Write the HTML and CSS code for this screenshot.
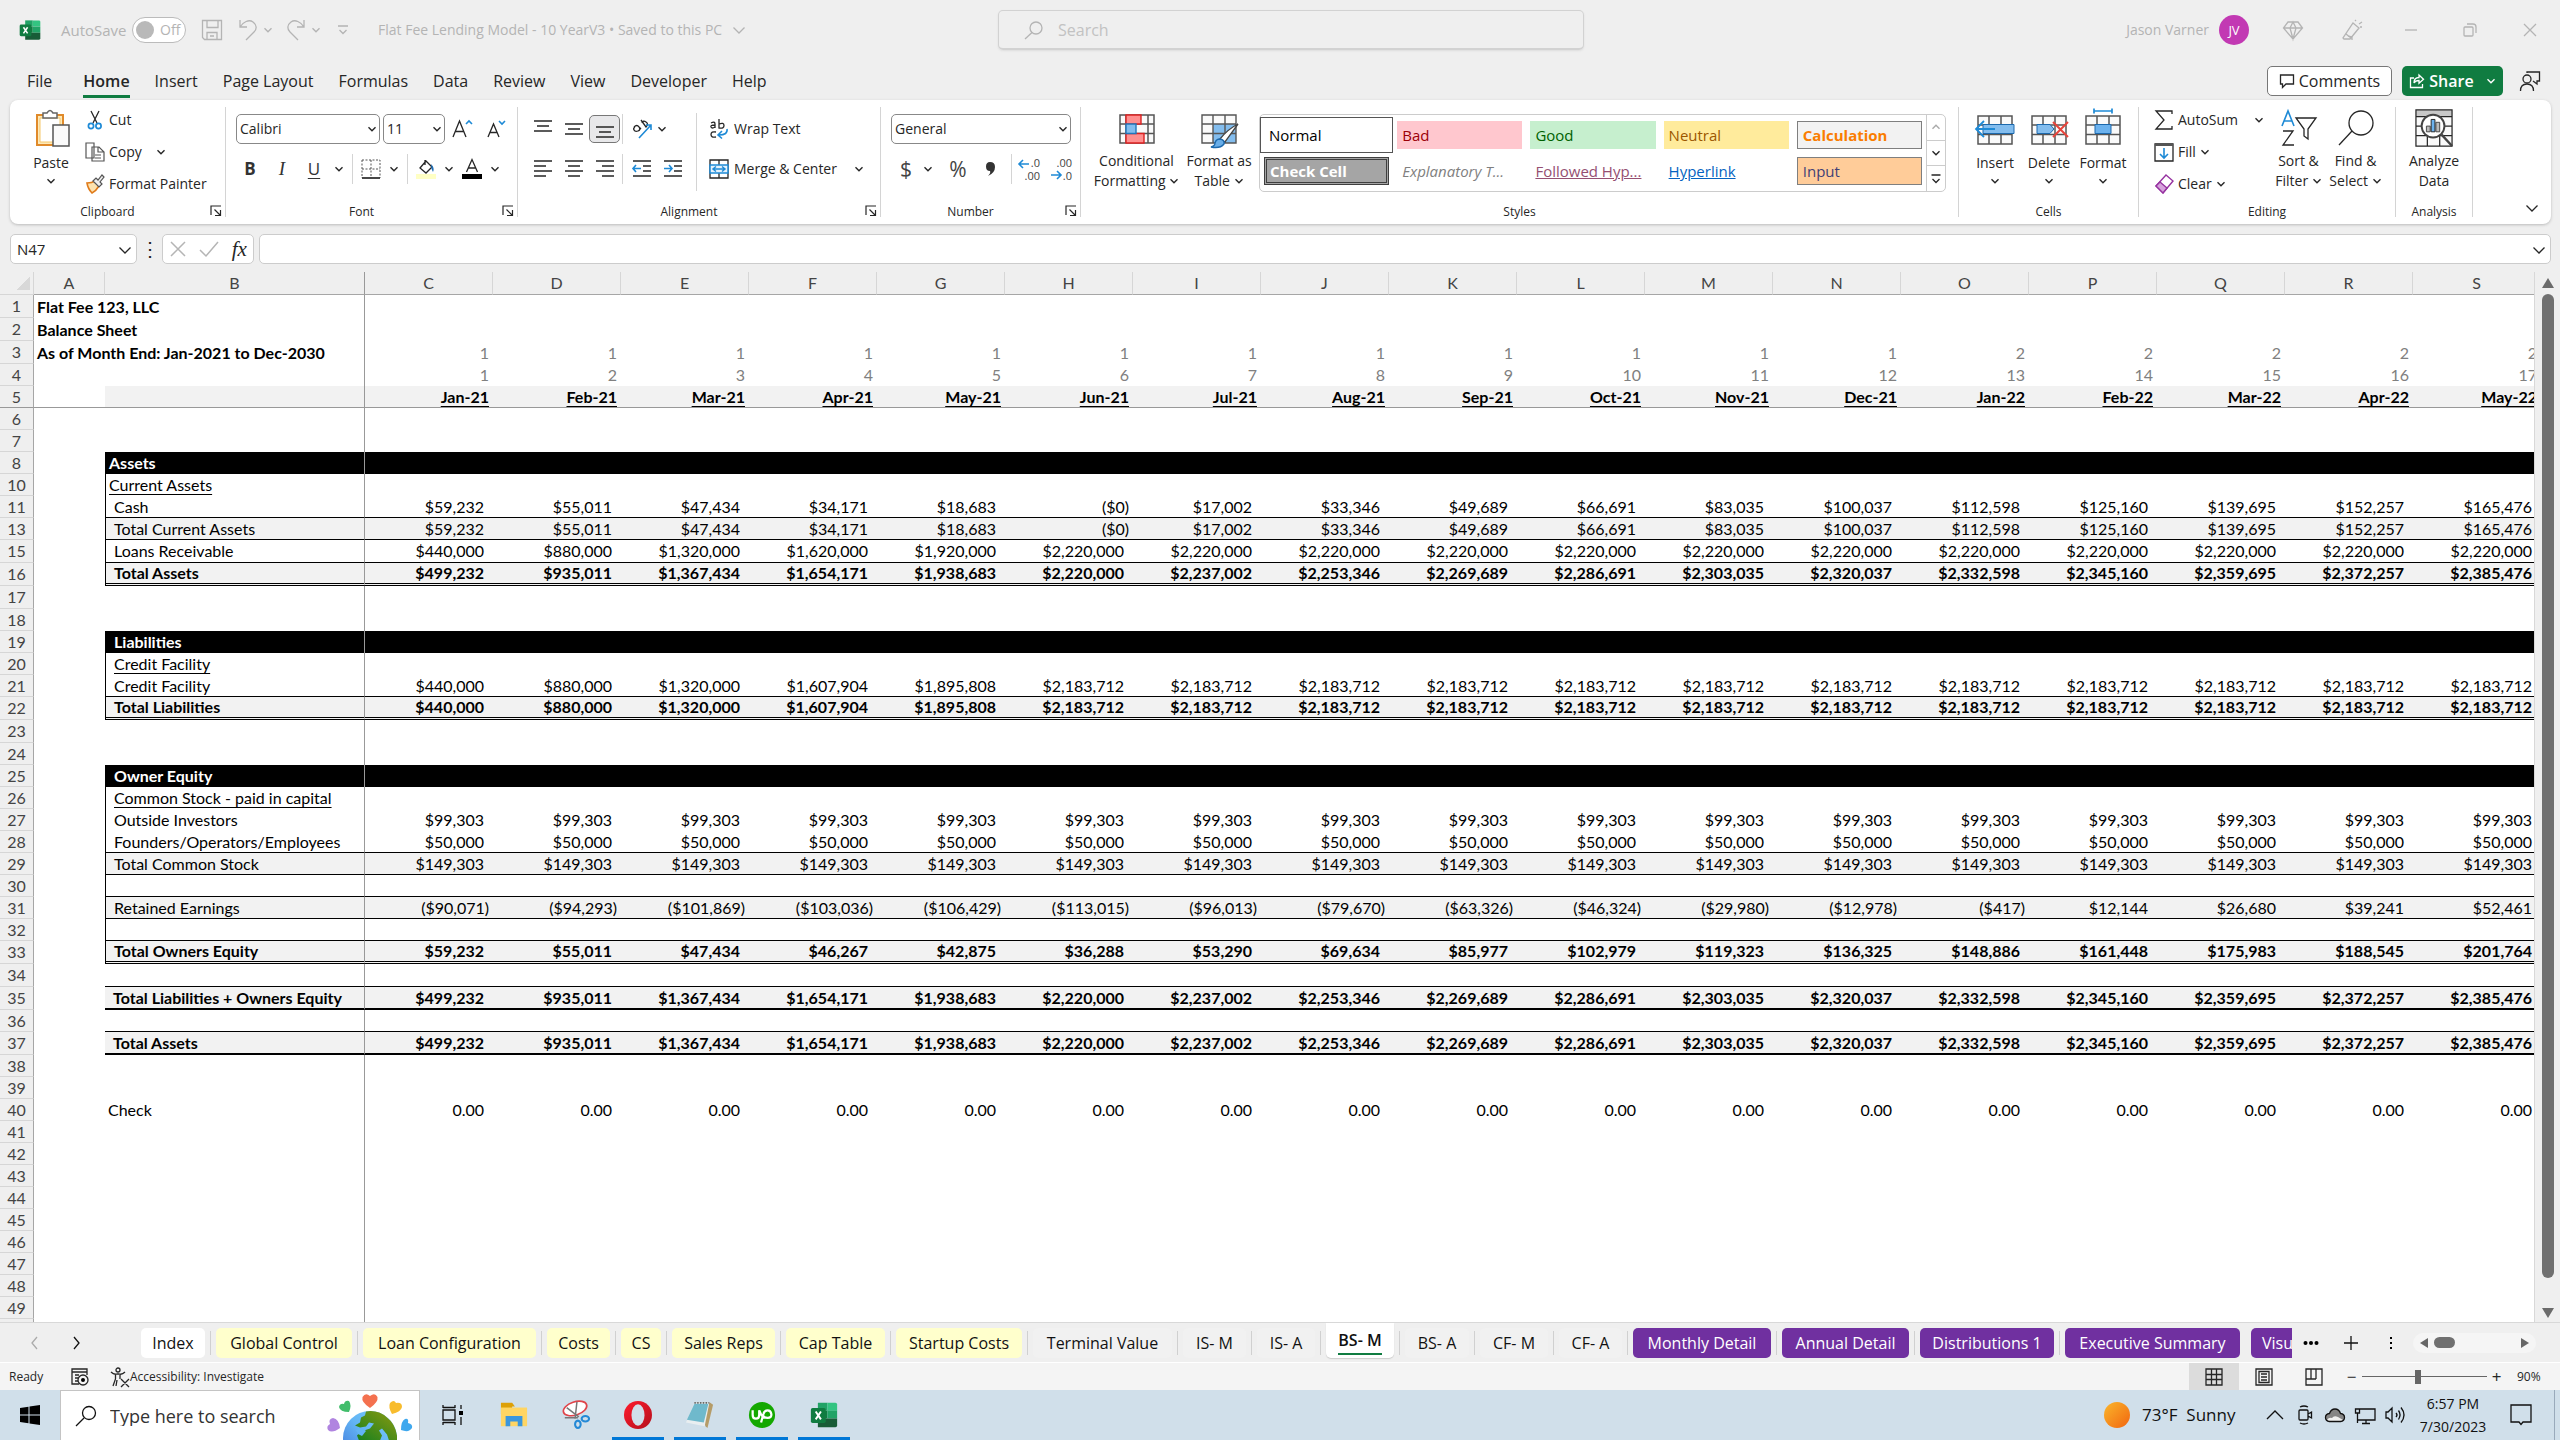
FILE: index.html
```html
<!DOCTYPE html>
<html lang="en">
<head>
<meta charset="utf-8">
<title>Flat Fee Lending Model - 10 YearV3</title>
<link rel="stylesheet" href="styles.css">
</head>
<body>
<svg class="defs" aria-hidden="true">
  <symbol id="chev" viewBox="0 0 10 10"><path d="M1.5 3.2 5 6.7 8.500 3.200" fill="none" stroke="currentColor" stroke-width="1.4"/></symbol>
  <symbol id="wide" viewBox="0 0 14 14"><path d="M1.500 4.500 7 10l5.500-5.500" fill="none" stroke="currentColor" stroke-width="1.300"/></symbol>
  <symbol id="launch" viewBox="0 0 12 12"><path d="M1 10V1h10M4.500 4.500 10 10M10.500 5v5.500H5" fill="none" stroke="currentColor" stroke-width="1.200"/></symbol>
  <symbol id="excel" viewBox="0 0 32 32"><path d="M9 2h11v9H9z" fill="#21a366"/><path d="M20 2h9q2 0 2 2v7H20z" fill="#33c481"/><path d="M9 11h11v9H9z" fill="#107c41"/><path d="M20 11h11v9H20z" fill="#21a366"/><path d="M9 20h22v8q0 2-2 2H9z" fill="#185c37"/><rect x="1" y="8" width="17" height="17" rx="2" fill="#107c41"/><path d="m6.500 12 6 9M12.500 12l-6 9" stroke="#fff" stroke-width="2.200"/></symbol>
  <symbol id="grid" viewBox="0 0 36 30"><path d="M1 1h34v28H1z" fill="#fafafa"/><path d="M1 1h34v28H1zM1 10h34M1 19.500h34M12 1v28M24 1v28" fill="none" stroke="#555" stroke-width="1.500"/></symbol>
</svg>

<header class="titlebar">
  <div class="title-left">
    <svg class="i22"><use href="#excel"/></svg>
    <label class="autosave" for="autosave">AutoSave</label>
    <span class="toggle"><input type="checkbox" id="autosave"><span>Off</span></span>
    <button class="plain save" aria-label="Save"><svg class="i22" viewBox="0 0 22 22"><path d="M1.500 1.500h19v19h-17l-2-2zM6 1.500v7h11v-7M6 20.500v-7h10v7M9 17h4" class="ln"/></svg></button>
    <button class="plain hist" aria-label="Undo"><svg class="i22" viewBox="0 0 22 22"><path d="M3 1v7h7M3 8C6 3 12 0 16 3s4 7 1 10l-8 8" class="ln"/></svg><svg class="i10"><use href="#chev"/></svg></button>
    <button class="plain hist" aria-label="Redo"><svg class="i22" viewBox="0 0 22 22"><path d="M19 1v7h-7M19 8C16 3 10 0 6 3s-4 7-1 10l8 8" class="ln"/></svg><svg class="i10"><use href="#chev"/></svg></button>
    <button class="plain custom" aria-label="Customize toolbar"><svg class="i12" viewBox="0 0 12 12"><path d="M1 2h10M2.500 6 6 9.500 9.500 6" class="ln"/></svg></button>
    <button class="plain doc">Flat Fee Lending Model - 10 YearV3 • Saved to this PC <svg class="i14"><use href="#wide"/></svg></button>
  </div>
  <label class="search"><svg class="i20" viewBox="0 0 20 20"><circle cx="12" cy="8" r="6" class="ln"/><path d="m8 12.500-7 6.500" class="ln"/></svg><input type="text" placeholder="Search" aria-label="Search"></label>
  <div class="title-right">
    <span>Jason Varner</span><span class="avatar">JV</span>
    <button class="plain win" aria-label="Premium"><svg class="i22" viewBox="0 0 22 22"><path d="M6 3h10l4.500 6L11 20 1.500 9zM1.500 9h19M8 9l3 11 3-11M8 9l3-6 3 6" class="ln"/></svg></button>
    <button class="plain win" aria-label="Coming soon"><svg class="i22" viewBox="0 0 22 22"><path d="m12 4 6 5-9 11H3l-1-1zM5 15l5 4M14 2l1-1M18 5l3-2M19 8h2M7 17l4 1 0 3" class="ln"/></svg></button>
    <button class="plain win" aria-label="Minimize"><svg class="i14" viewBox="0 0 14 14"><path d="M1 7h12" class="ln"/></svg></button>
    <button class="plain win" aria-label="Restore"><svg class="i14" viewBox="0 0 14 14"><path d="M1 5q0-1 1-1h7q1 0 1 1v7q0 1-1 1H2q-1 0-1-1zM4 1h6q3 0 3 3v6" class="ln"/></svg></button>
    <button class="plain win" aria-label="Close"><svg class="i14" viewBox="0 0 14 14"><path d="m1 1 12 12M13 1 1 13" class="ln"/></svg></button>
  </div>
</header>

<nav class="menu">
  <a href="#">File</a><a href="#" class="on">Home</a><a href="#">Insert</a><a href="#">Page Layout</a><a href="#">Formulas</a><a href="#">Data</a><a href="#">Review</a><a href="#">View</a><a href="#">Developer</a><a href="#">Help</a>
  <div class="menu-right">
    <button class="comments"><svg class="i16" viewBox="0 0 16 16"><path d="M1.500 2h13v9H7l-3.500 3.500V11h-2z" class="ln"/></svg>Comments</button>
    <button class="share"><svg class="i16" viewBox="0 0 16 16"><path d="M5 5H1.500v9.500h12V11M5 10c0-4 2-5.500 5-5.500V2l4.500 4.200-4.500 4V7.500C8 7.500 6 8 5 10z" class="ln"/></svg>Share<svg class="i10"><use href="#chev"/></svg></button>
    <button class="plain" aria-label="Presence"><svg class="i22" viewBox="0 0 22 22"><circle cx="8" cy="9" r="4" class="ln"/><path d="M1.500 21c0-5 3-7 6.500-7s6.500 2 6.500 7M8 3V2h12.500v9H18v3l-4-3" class="ln"/></svg></button>
  </div>
</nav>

<section class="ribbon">
  <div class="group g-clip">
    <div class="body">
      <button class="big paste"><svg viewBox="0 0 36 38"><path d="M2 6h26v30H2z" fill="#fde9b8" stroke="#e08a2a" stroke-width="2"/><path d="M5 9h20v24H5z" fill="#fff" stroke="#f5c76b"/><path d="M8 4h4q3-5 6 0h4v5H8z" fill="#fff" stroke="#666" stroke-width="1.500"/><path d="M18 16h16v21H18z" fill="#fafafa" stroke="#555" stroke-width="1.500"/></svg><span>Paste</span><svg class="i10"><use href="#chev"/></svg></button>
      <div class="stack">
        <button class="row"><svg class="i20" viewBox="0 0 20 20"><path d="m6 1 6 12M14 1 8 13" class="ln"/><g fill="none" stroke="#1e8ad6" stroke-width="1.700"><circle cx="6" cy="16" r="2.600"/><circle cx="13.500" cy="16" r="2.600"/></g></svg>Cut</button>
        <button class="row"><svg class="i20" viewBox="0 0 20 20"><path d="M1 1h8v15H1zM7 5h7l5 5v9H7zM13 5v5h6M10 13h6M10 16h6" fill="#fff" stroke="#555" stroke-width="1.200"/></svg>Copy<svg class="i10 far"><use href="#chev"/></svg></button>
        <button class="row"><svg class="i20" viewBox="0 0 20 20"><path d="M2 9q5 0 8-2l4 5q-3 5-7 7-4-4-5-10z" fill="#fde3b0" stroke="#e07b1a" stroke-width="1.600"/><path d="m8 7 3-3 2 2 4-5 2 2-4 5 2 2-3 3z" fill="#eee" stroke="#555" stroke-width="1.200"/></svg>Format Painter</button>
      </div>
    </div>
    <div class="label off">Clipboard<svg class="i12"><use href="#launch"/></svg></div>
  </div>

  <div class="group g-font">
    <div class="body lines">
      <div class="line">
        <span class="combo w-font"><select aria-label="Font"><option>Calibri</option></select><svg class="i10"><use href="#chev"/></svg></span>
        <span class="combo w-size"><select aria-label="Font size"><option>11</option></select><svg class="i10"><use href="#chev"/></svg></span>
        <button class="ib grow" aria-label="Increase font size"><svg class="i22" viewBox="0 0 22 22"><path d="M0 19 6.500 3 13 19M2.500 13.500h8" class="ln"/><path d="m13 6 3-3 3 3" class="lb"/></svg></button>
        <button class="ib" aria-label="Decrease font size"><svg class="i22" viewBox="0 0 22 22"><path d="M2 19 7.500 6 13 19M4 14.500h7" class="ln"/><path d="m13 3 3 3 3-3" class="lb"/></svg></button>
      </div>
      <div class="line tools">
        <button class="ib fmt b">B</button><button class="ib fmt i">I</button><button class="ib fmt u">U</button><svg class="i10"><use href="#chev"/></svg><i class="sep"></i>
        <button class="ib" aria-label="Borders"><svg class="i20" viewBox="0 0 20 20"><path d="M1 1h18v18M1 1v18M10 1v18M1 10h18" fill="none" stroke="#555" stroke-dasharray="2 1.500"/><path d="M1 19h18" stroke="#333" stroke-width="1.800"/></svg></button><svg class="i10"><use href="#chev"/></svg><i class="sep"></i>
        <button class="ib" aria-label="Fill color"><svg class="i20" viewBox="0 0 20 20"><path d="m4 9 6-7 6 6-6 6zM9 1v5" class="ln"/><path d="M15 5q4 4 2 8-2-3-2-8z" fill="#1e6fb8"/><path d="M0 15h20v5H0z" fill="#ffffc4"/></svg></button><svg class="i10"><use href="#chev"/></svg>
        <button class="ib" aria-label="Font color"><svg class="i20" viewBox="0 0 20 20"><path d="M4.500 13 10 0.500 15.500 13M6.500 9h7" class="ln"/><path d="M0 15h20v5H0z"/></svg></button><svg class="i10"><use href="#chev"/></svg>
      </div>
    </div>
    <div class="label off">Font<svg class="i12"><use href="#launch"/></svg></div>
  </div>

  <div class="group g-align">
    <div class="body">
      <div class="lines">
        <div class="line al">
          <button class="ib" aria-label="Top align"><svg class="i20" viewBox="0 0 20 20"><path d="M1 2h18M4 7h12M1 12h18" class="ln"/></svg></button>
          <button class="ib" aria-label="Middle align"><svg class="i20" viewBox="0 0 20 20"><path d="M1 5h18M4 10h12M1 15h18" class="ln"/></svg></button>
          <button class="ib sel" aria-label="Bottom align"><svg class="i20" viewBox="0 0 20 20"><path d="M1 8h18M4 13h12M1 18h18" class="ln"/></svg></button><i class="sep"></i>
          <button class="ib" aria-label="Orientation"><svg class="i20" viewBox="0 0 20 20"><path d="M2 8q3-3 5 0t-1 4-4-1 1-3M7 8l2 2M9 1l5 7q3-3 0-5t-4 1" class="ln"/><path d="M7 19 19 6M14 6h5v5" class="lb"/></svg></button><svg class="i10"><use href="#chev"/></svg>
        </div>
        <div class="line al">
          <button class="ib" aria-label="Align left"><svg class="i20" viewBox="0 0 20 20"><path d="M1 2h18M1 7h12M1 12h18M1 17h12" class="ln"/></svg></button>
          <button class="ib" aria-label="Center"><svg class="i20" viewBox="0 0 20 20"><path d="M1 2h18M4 7h12M1 12h18M4 17h12" class="ln"/></svg></button>
          <button class="ib" aria-label="Align right"><svg class="i20" viewBox="0 0 20 20"><path d="M1 2h18M7 7h12M1 12h18M7 17h12" class="ln"/></svg></button><i class="sep"></i>
          <button class="ib" aria-label="Decrease indent"><svg class="i20" viewBox="0 0 20 20"><path d="M1 2h18M11 7h8M11 12h8M1 17h18" class="ln"/><path d="M9 9.500H1M4 6 1 9.500 4 13" class="lb"/></svg></button>
          <button class="ib" aria-label="Increase indent"><svg class="i20" viewBox="0 0 20 20"><path d="M1 2h18M11 7h8M11 12h8M1 17h18" class="ln"/><path d="M1 9.500h8M6 6l3 3.500L6 13" class="lb"/></svg></button>
        </div>
      </div>
      <i class="sep tall"></i>
      <div class="lines wrapcol">
        <button class="row"><svg class="i20" viewBox="0 0 20 20"><path d="M2 4q4-2 4 1v4M6 6Q1 6 2 8t4 0M10 0v9q5 1 5-2.500T10 5M7 13q-5-1-5 2.500T7 18" class="ln"/><path d="M18 10q1 6-8 6M13 12l-4 4 4 3.500" class="lb"/></svg>Wrap Text</button>
        <button class="row"><svg class="i20" viewBox="0 0 20 20"><path d="M1 1h18v18H1zM10 1v5M10 14v5" class="ln"/><path d="M1 6h18v8H1zM4 10h12M7 7.500 4 10l3 2.500M13 7.500 16 10l-3 2.500" fill="#e6f2fb" stroke="#1e8ad6" stroke-width="1.500"/></svg>Merge &amp; Center<svg class="i10 far"><use href="#chev"/></svg></button>
      </div>
    </div>
    <div class="label off">Alignment<svg class="i12"><use href="#launch"/></svg></div>
  </div>

  <div class="group g-num">
    <div class="body lines">
      <div class="line"><span class="combo w-num"><select aria-label="Number format"><option>General</option></select><svg class="i10"><use href="#chev"/></svg></span></div>
      <div class="line nums">
        <button class="ib sym">$</button><svg class="i10"><use href="#chev"/></svg><button class="ib sym">%</button><button class="ib comma" aria-label="Comma style"><svg class="i20" viewBox="0 0 20 20"><path d="M10 3q5 0 5 5 0 6-7 9 3-3 2-5-4 0-4-4.500Q6 3 10 3z" fill="#333"/></svg></button><i class="sep"></i>
        <button class="ib dec" aria-label="Increase decimal"><span>.0</span><span>.00</span><svg class="i12 a1" viewBox="0 0 12 12"><path d="M11 6H1M5 2 1 6l4 4" class="lb"/></svg></button>
        <button class="ib dec" aria-label="Decrease decimal"><span>.00</span><span>.0</span><svg class="i12 a2" viewBox="0 0 12 12"><path d="M1 6h10M7 2l4 4-4 4" class="lb"/></svg></button>
      </div>
    </div>
    <div class="label off">Number<svg class="i12"><use href="#launch"/></svg></div>
  </div>

  <div class="group g-styles">
    <div class="body">
      <button class="big two"><svg viewBox="0 0 36 30"><path d="M1 1h34v28H1z" fill="#fafafa"/><path d="M1 1h34v28H1zM1 10h34M1 19.500h34M7 1v28M29 1v28" fill="none" stroke="#555" stroke-width="1.500"/><path d="M7 1h15v9H7zM7 19.500h18V29H7z" fill="#ff8f8f" stroke="#d22" stroke-width="1.400"/><path d="M7 10h10v9.500H7z" fill="#83bdee" stroke="#2277bb" stroke-width="1.400"/></svg><span>Conditional<br>Formatting <svg class="i10"><use href="#chev"/></svg></span></button>
      <button class="big two tbl"><svg viewBox="0 0 36 30"><path d="M1 1h34v28H1z" fill="#fafafa"/><path d="M12 10h23v19H12z" fill="#83bdee"/><path d="M1 1h34v28H1zM1 10h34M1 19.500h34M12 1v28M24 1v28" fill="none" stroke="#555" stroke-width="1.400"/><path d="M37 10 24 28l-5-3q8-10 18-15z" fill="#fff" stroke="#444" stroke-width="1.300"/><path d="M19 25q5 1 4 5-4 5-13 3 4-1 4-4 1-4 5-4z" fill="#69aee8" stroke="#1c69ad" stroke-width="1.400"/></svg><span>Format as<br>Table <svg class="i10"><use href="#chev"/></svg></span></button>
      <div class="gallery">
        <div class="cells">
          <button class="st normal">Normal</button><button class="st bad">Bad</button><button class="st good">Good</button><button class="st neutral">Neutral</button><button class="st calc">Calculation</button>
          <button class="st check">Check Cell</button><button class="st expl">Explanatory T...</button><button class="st fol">Followed Hyp...</button><button class="st hyp">Hyperlink</button><button class="st input">Input</button>
        </div>
        <div class="spin"><button aria-label="Up"><svg class="i10 flip"><use href="#chev"/></svg></button><button aria-label="Down"><svg class="i10"><use href="#chev"/></svg></button><button aria-label="More"><svg class="i12" viewBox="0 0 12 12"><path d="M1.500 2h9M2.500 6 6 9.500 9.500 6" class="ln"/></svg></button></div>
      </div>
    </div>
    <div class="label">Styles</div>
  </div>

  <div class="group g-cells">
    <div class="body">
      <button class="big"><svg viewBox="0 0 40 38"><use href="#grid" x="2" y="6" width="36" height="30"/><path d="M8 15.500h31v9H8z" fill="#83bdee" stroke="#1c69ad"/><path d="M20 20H1M9 12l-8 8 8 8" fill="none" stroke="#1e8ad6" stroke-width="1.800"/></svg><span>Insert</span><svg class="i10"><use href="#chev"/></svg></button>
      <button class="big"><svg viewBox="0 0 40 38"><use href="#grid" x="2" y="6" width="36" height="30"/><path d="M8 15.500h13l4 4.500-4 4.500H8z" fill="#83bdee" stroke="#1c69ad"/><path d="m24 13 15 15M39 13 24 28" stroke="#e8443a" stroke-width="2"/></svg><span>Delete</span><svg class="i10"><use href="#chev"/></svg></button>
      <button class="big"><svg viewBox="0 0 40 38"><use href="#grid" x="2" y="6" width="36" height="30"/><path d="M12 15.500h16v9H12z" fill="#6cb2ee" stroke="#1c69ad"/><path d="M11 2h18M11-.5v5M29-.5v5" stroke="#1e8ad6" stroke-width="1.700"/></svg><span>Format</span><svg class="i10"><use href="#chev"/></svg></button>
    </div>
    <div class="label">Cells</div>
  </div>

  <div class="group g-edit">
    <div class="body">
      <div class="stack">
        <button class="row"><svg class="i20" viewBox="0 0 20 20"><path d="M18 4V1H2l8 9-8 9h16v-3" class="ln"/></svg>AutoSum<svg class="i10 far"><use href="#chev"/></svg></button>
        <button class="row"><svg class="i20" viewBox="0 0 20 20"><path d="M1 2h18v17H1z" class="ln"/><path d="M1 1h18v3H1z" fill="#555"/><path d="M10 6v10M6 12l4 4 4-4" class="lb"/></svg>Fill<svg class="i10 near"><use href="#chev"/></svg></button>
        <button class="row"><svg class="i20" viewBox="0 0 20 20"><path d="M12 1 19 7 9 19 2 12z" fill="#fff" stroke="#9632a0" stroke-width="1.400"/><path d="m6 8 7 6-4 5-7-7z" fill="#d6a3dc" stroke="#9632a0" stroke-width="1.400"/></svg>Clear<svg class="i10 near"><use href="#chev"/></svg></button>
      </div>
      <button class="big two"><svg viewBox="0 0 36 38"><path d="m1 17 6-15 6 15M3 12h8" class="lb"/><path d="M2 22h10L2 36h11M15 9h20l-8 11v10l-4-3v-7z" class="ln"/></svg><span>Sort &amp;<br>Filter <svg class="i10"><use href="#chev"/></svg></span></button>
      <button class="big two"><svg viewBox="0 0 36 38"><circle cx="23" cy="14" r="12" class="ln"/><path d="M14 22 1 36" class="ln"/></svg><span>Find &amp;<br>Select <svg class="i10"><use href="#chev"/></svg></span></button>
    </div>
    <div class="label">Editing</div>
  </div>

  <div class="group g-ana">
    <div class="body">
      <button class="big two"><svg viewBox="0 0 40 40"><path d="M1 1h38v38H1z" fill="#fafafa"/><path d="M1 1h38v7H1z" fill="#c8c8c8"/><path d="M1 1h38v38H1zM1 8h38M1 18h38M1 28h38M13 28v11M26 28v11" class="ln"/><circle cx="19" cy="18" r="12" fill="#fff" stroke="#444" stroke-width="2"/><path d="M12 18h4v6h-4zM22 14h4v10h-4z" fill="#bbb" stroke="#444"/><path d="M17 11h4v13h-4z" fill="#6cb2ee" stroke="#222"/><path d="m28 27 11 12" stroke="#444" stroke-width="2.500"/></svg><span>Analyze<br>Data</span></button>
    </div>
    <div class="label">Analysis</div>
  </div>
  <button class="plain collapse" aria-label="Collapse ribbon"><svg class="i14"><use href="#wide"/></svg></button>
</section>

<section class="formula">
  <span class="combo name"><input type="text" value="N47" aria-label="Name box"><svg class="i14"><use href="#wide"/></svg></span>
  <span class="dots">⋮</span>
  <div class="fx"><button class="plain" aria-label="Cancel"><svg class="i18" viewBox="0 0 18 18"><path d="m2 2 14 14M16 2 2 16" class="lg"/></svg></button><button class="plain" aria-label="Enter"><svg class="i20" viewBox="0 0 20 18"><path d="m1 10 6 6L19 2" class="lg"/></svg></button><button class="plain fxb">fx</button></div>
  <span class="combo fbar"><input type="text" aria-label="Formula bar"><svg class="i14"><use href="#wide"/></svg></span>
</section>

<main class="sheet">
  <div class="viewport"><table class="grid" id="grid-table"></table></div>
  <div class="vscroll"><svg class="i14" viewBox="0 0 14 14"><path d="M7 2 13 12H1z"/></svg><div class="thumb"></div><svg class="i14" viewBox="0 0 14 14"><path d="M7 12 1 2h12z"/></svg></div>
</main>

<nav class="tabs">
  <div class="arrows"><svg class="i14 dim" viewBox="0 0 14 14"><path d="M9 1 4 7l5 6" class="ln"/></svg><svg class="i14" viewBox="0 0 14 14"><path d="m5 1 5 6-5 6" class="ln"/></svg></div>
  <div class="strip">
    <a href="#" class="w">Index</a><a href="#" class="y">Global Control</a><a href="#" class="y">Loan Configuration</a><a href="#" class="y">Costs</a><a href="#" class="y">CS</a><a href="#" class="y">Sales Reps</a><a href="#" class="y">Cap Table</a><a href="#" class="y">Startup Costs</a><a href="#">Terminal Value</a><a href="#">IS- M</a><a href="#">IS- A</a><a href="#" class="cur"><span>BS- M</span></a><a href="#">BS- A</a><a href="#">CF- M</a><a href="#">CF- A</a><a href="#" class="p">Monthly Detail</a><a href="#" class="p">Annual Detail</a><a href="#" class="p">Distributions 1</a><a href="#" class="p">Executive Summary</a><a href="#" class="p last">Visu</a>
  </div>
  <div class="tabtools"><button class="plain" aria-label="More sheets"><svg class="i16" viewBox="0 0 16 16"><circle cx="2.500" cy="8" r="2"/><circle cx="8" cy="8" r="2"/><circle cx="13.500" cy="8" r="2"/></svg></button><button class="plain" aria-label="New sheet"><svg class="i16" viewBox="0 0 16 16"><path d="M8 1v14M1 8h14" class="ln"/></svg></button><button class="plain" aria-label="Resize"><svg class="i16" viewBox="0 0 16 16"><path d="M7 2h2v2H7zM7 7h2v2H7zM7 12h2v2H7z"/></svg></button>
    <div class="hscroll"><svg class="i10" viewBox="0 0 10 10"><path d="M9 0v10L1 5z"/></svg><i></i><svg class="i10" viewBox="0 0 10 10"><path d="M1 0v10l8-5z"/></svg></div></div>
</nav>

<footer class="status">
  <span class="ready">Ready</span>
  <svg class="i18" viewBox="0 0 18 18"><path d="M16 7V1H1v15h7M1 4h15M4 7h4M4 10h3M4 13h3" class="ln"/><circle cx="12" cy="12" r="5" class="ln"/><circle cx="12" cy="12" r="2"/></svg>
  <svg class="i20 acc" viewBox="0 0 20 20"><circle cx="8" cy="3" r="2" class="ln"/><path d="M1 5q3 3 6 2h2q3 1 6-2M5.500 8v4L3 19M10 8v4M7 13l-1 6M11 12l8 8M19 12l-8 8" class="ln"/></svg>
  <span>Accessibility: Investigate</span>
  <div class="views">
    <button class="view on" aria-label="Normal view"><svg class="i18" viewBox="0 0 18 18"><path d="M1 1h16v16H1zM6.500 1v16M11.500 1v16M1 6.500h16M1 11.500h16" class="ln"/></svg></button>
    <button class="view" aria-label="Page layout view"><svg class="i18" viewBox="0 0 18 18"><path d="M1 1h16v16H1zM4 3.500h10v11H4zM6 6h6M6 9h6M6 12h6" class="ln"/></svg></button>
    <button class="view" aria-label="Page break view"><svg class="i18" viewBox="0 0 18 18"><path d="M1 1h16v16H1zM6 1v10M11 1v10M1 11h10" class="ln"/></svg></button>
    <span class="pm">−</span><input type="range" class="zoom" min="10" max="190" value="90" aria-label="Zoom"><span class="pm">+</span><span class="pct">90%</span>
  </div>
</footer>

<footer class="taskbar">
  <button class="plain start" aria-label="Start"><svg class="i20" viewBox="0 0 20 20"><path d="m0 3 8.500-1.200v7.700H0zM9.500 1.600 20 0v9.500H9.500zM0 10.500h8.500v7.700L0 17zM9.500 10.500H20V20L9.500 18.400z"/></svg></button>
  <label class="tsearch"><svg class="i22" viewBox="0 0 22 22"><circle cx="14" cy="8" r="6.500" class="ln"/><path d="m9 13-8 8" class="ln"/></svg><input type="text" placeholder="Type here to search" aria-label="Type here to search">
    <svg class="globe" viewBox="0 0 88 48"><defs><linearGradient id="sea" x1="0" y1="1" x2="1" y2="0"><stop offset="0" stop-color="#3f6fd8"/><stop offset=".5" stop-color="#62b4f4"/><stop offset="1" stop-color="#7fd0ff"/></linearGradient><linearGradient id="land" x1="0" y1="1" x2="1" y2="0"><stop offset="0" stop-color="#15801f"/><stop offset="1" stop-color="#8d9a10"/></linearGradient></defs><circle cx="45" cy="46" r="27" fill="url(#sea)"/><path d="M41 19.500q12-2 21 6 8 6 10 18v5H64l-2-6-5-6-3 2 3 5-2 5H34l-2-5 4-4 9-3 4-5-5-1-3 4-6 1-5-2 5-3 1-5 4-2z" fill="url(#land)"/><path d="M31 38l6-2 4 3-4 5-4-2z" fill="#62b4f4"/><path d="M45 16q-9-6-7.500-11 3-5 7.500-1 5-4 7.500 1 1 5-7.500 11z" fill="#f4714f"/><path d="M24 20q-9 0-10-5 1-4 5-3 1-4 5-3 3 4 0 11z" fill="#41bd6b"/><path d="M67 22q-4-7-2-11 4-4 6 0 6-1 6 4-1 5-10 7z" fill="#f8bc2d"/><path d="M15 36q-8 6-12 2-2-4 2-6-2-5 3-6 6 1 7 10z" fill="#b084e0"/><path d="M76 38q0-9 4-11 4-1 3 4 5 1 4 5-3 5-11 2z" fill="#3fa8ee"/></svg>
  </label>
  <div class="apps">
    <button class="app first" aria-label="Task view"><svg class="i22" viewBox="0 0 22 22"><path d="M2 6h12v10H2zM2 4V1M14 4V1M2 3.500h12M2 18v3M14 18v3M2 18.500h12M20 1v4M20 13v8" class="ln"/><path d="M18 7h4v4h-4z"/></svg></button>
    <button class="app" aria-label="File Explorer"><svg viewBox="0 0 30 28"><path d="M1 1h12l3 4h-3v8H1z" fill="#dda008"/><path d="M1 6h28v20H1z" fill="#ffd563"/><path d="M6 26V15h18v11h-5v-5h-8v5z" fill="#3a96dd"/></svg></button>
    <button class="app" aria-label="Snip &amp; Sketch"><svg viewBox="0 0 30 30"><ellipse cx="14" cy="8" rx="13" ry="7" fill="#fff" stroke="#e0444a" stroke-width="1.800" transform="rotate(-18 14 8)"/><path d="m5 7 13 10M16 1l-2 18M3 18l14 0" stroke="#777" stroke-width="1.600"/><g fill="none" stroke="#2489d6" stroke-width="2.200"><ellipse cx="17" cy="25" rx="3" ry="4"/><ellipse cx="25" cy="19" rx="4" ry="3"/></g></svg></button>
    <button class="app run" aria-label="Opera"><svg viewBox="0 0 30 30"><defs><linearGradient id="op" x1="0" y1="0" x2="1" y2="1"><stop offset="0" stop-color="#ff1b2d"/><stop offset="1" stop-color="#b3101c"/></linearGradient></defs><circle cx="15" cy="15" r="15" fill="url(#op)"/><ellipse cx="15" cy="15" rx="7" ry="11.500" fill="#d0dfea"/></svg></button>
    <button class="app run" aria-label="Notepad"><svg viewBox="0 0 30 30"><path d="M9 2h17l3 2-6 25-2-2z" fill="#b59c68"/><path d="M9 2h16l-5 25-20-4z" fill="#e9eef0"/><path d="M9 3h15l-5 20-18-3z" fill="#6fb9cc"/><path d="M9 2h16" stroke="#666" stroke-width="2" stroke-dasharray="1.500 1.500"/></svg></button>
    <button class="app run" aria-label="Upwork"><svg viewBox="0 0 30 30"><circle cx="15" cy="15" r="14" fill="#14a800"/><path d="M5 10v5q0 4 3.500 4t3.500-4v-5q2 6 6 8M14 23l2.500-9q1-4 4.500-4t4 4-4 4-5-3" fill="none" stroke="#fff" stroke-width="2.400"/></svg></button>
    <button class="app run" aria-label="Excel"><svg viewBox="0 0 32 32"><use href="#excel"/></svg></button>
  </div>
  <div class="tray">
    <svg class="sun" viewBox="0 0 26 26"><defs><linearGradient id="sg" x1="0" y1="0" x2="1" y2="1"><stop offset="0" stop-color="#fab72c"/><stop offset="1" stop-color="#f2650f"/></linearGradient></defs><circle cx="13" cy="13" r="13" fill="url(#sg)"/></svg>
    <span class="weather">73°F&nbsp; Sunny</span>
    <svg class="i20" viewBox="0 0 20 20"><path d="m2 14 8-8 8 8" class="ln"/></svg>
    <svg class="i20" viewBox="0 0 20 20"><path d="M4 6q0-1 1-1h7q1 0 1 1v8q0 1-1 1H5q-1 0-1-1zM13 9l3.500-2v6L13 11M5 2q4-2 8 0M5 18q4 2 8 0" class="ln"/></svg>
    <svg class="i20" viewBox="0 0 20 20"><path d="M4.500 16.500Q.5 16 .5 12.500T4.500 8.500Q6 4 10 4t5.500 4.500q4 .5 4 4t-4 4z" fill="#858585"/><path d="M2 15q2-3 5-2 2-3 6-1l5 3q-1 1.500-3 1.500H4.500Q3 16.500 2 15z" fill="#f0f0f0"/><path d="M4.500 16.500Q.5 16 .5 12.500T4.500 8.500Q6 4 10 4t5.500 4.500q4 .5 4 4t-4 4z" class="ln"/></svg>
    <svg class="i20" viewBox="0 0 20 20"><path d="M4 4h16v11H3M11 15v3M7 18.500h8M.5 4h4v4h-4zM2.500 8v10" class="ln"/></svg>
    <svg class="i20" viewBox="0 0 20 20"><path d="M1 7h2l4-4v14l-4-4H1zM11 8q2 2 0 4M13.500 5.500q3 4 0 9M16 2.500q6 7.500 0 15" class="ln"/></svg>
    <div class="clock"><span>6:57 PM</span><span>7/30/2023</span></div>
    <svg class="i22 note" viewBox="0 0 22 22"><path d="M1 1h20v17h-8l-2 2.500L9 18H1z" class="ln"/></svg>
    <i class="desk"></i>
  </div>
</footer>
<script src="grid.js"></script>
</body>
</html>
```
FILE: styles.css
```css
* { box-sizing: border-box; }
html, body { height: 100%; }
body { margin: 0; display: flex; flex-direction: column; background: #efefef; color: #262626; font: 14px/20px "Open Sans", "Noto Sans", sans-serif; overflow: hidden; }
button, input, select { font: inherit; color: inherit; }
button { border: 0; background: none; padding: 0; white-space: nowrap; }
a { color: inherit; text-decoration: none; }
svg { display: block; flex: none; overflow: visible; }
.defs { position: absolute; width: 0; height: 0; }
.i10 { width: 10px; height: 10px; }
.i12 { width: 12px; height: 12px; }
.i14 { width: 14px; height: 14px; }
.i16 { width: 16px; height: 16px; }
.i18 { width: 18px; height: 18px; }
.i20 { width: 20px; height: 20px; }
.i22 { width: 22px; height: 22px; }
.ln { fill: none; stroke: currentColor; stroke-width: 1.3; }
.lb { fill: none; stroke: #1e8ad6; stroke-width: 1.6; }
.lg { fill: none; stroke: #b5b5b5; stroke-width: 1.5; }
.plain { display: flex; align-items: center; }

/* title bar */
.titlebar { height: 60px; flex: none; display: grid; grid-template-columns: 1fr 586px 1fr; align-items: center; padding-left: 22px; color: #b4b4b4; font-size: 15px; }
.title-left { display: flex; align-items: center; }
.title-left > svg { margin-left: -3px; }
.autosave { margin-left: 20px; width: 71px; }
.toggle { position: relative; width: 54px; height: 26px; border: 1px solid #bbb; border-radius: 13px; background: #fff; font-size: 14px; line-height: 24px; padding-left: 27px; }
.toggle input { appearance: none; position: absolute; left: 3px; top: 3px; width: 18px; height: 18px; margin: 0; border-radius: 9px; background: #b9b9b9; }
.save { margin-left: 15px; }
.hist { margin-left: 14px; gap: 4px; }
.hist + .hist { margin-left: 12px; }
.custom { margin-left: 16px; }
.doc { margin-left: 29px; gap: 10px; font-size: 14px; }
.search { height: 40px; border: 1px solid #d2d2d2; border-bottom-width: 2px; border-radius: 5px; display: flex; align-items: center; gap: 14px; padding-left: 25px; box-shadow: 0 1px 2px #ddd; }
.search input { border: 0; background: none; padding: 0; flex: 1; font-size: 16px; }
.search input::placeholder { color: #c2c2c2; }
.title-right { display: flex; align-items: center; justify-content: flex-end; font-size: 14px; }
.avatar { width: 30px; height: 30px; border-radius: 15px; background: #c239b3; color: #fff; margin: 0 14px 0 10px; text-align: center; line-height: 30px; font-size: 13px; }
.win { width: 59px; justify-content: center; }
.win:last-child { width: 61px; }

/* menu tabs */
.menu { height: 40px; flex: none; display: flex; align-items: center; gap: 25px; padding: 2px 19px 0 27px; font-size: 16px; }
.menu a { height: 34px; line-height: 34px; border-bottom: 3px solid transparent; }
.menu a:first-child { margin-right: 6px; }
.menu .on { font-weight: 600; border-color: #107c41; }
.menu-right { margin-left: auto; display: flex; align-items: center; gap: 10px; }
.comments, .share { height: 30px; border-radius: 5px; display: flex; align-items: center; gap: 4px; }
.comments { border: 1px solid #777; background: #fff; width: 125px; justify-content: center; }
.share { background: #107c41; color: #fff; width: 101px; justify-content: center; font-weight: 600; margin-right: 6px; }
.share .i10 { margin-left: 8px; }

/* ribbon */
.ribbon { flex: none; margin: 0 9px 0 10px; height: 124px; background: #fff; border-radius: 8px; box-shadow: 0 1px 3px #bbb; display: flex; padding: 7px 0; }
.group { position: relative; display: flex; flex-direction: column; border-right: 1px solid #d4d4d4; height: 110px; }
.body { height: 94px; display: flex; }
.label { height: 16px; line-height: 20px; text-align: center; font-size: 12px; padding-top: 1px; }
.label.off { padding-right: 20px; }
.label svg { position: absolute; right: 3px; bottom: 0; }
.g-clip { width: 216px; }
.g-font { width: 292px; }
.g-align { width: 363px; }
.g-num { width: 200px; }
.g-styles { width: 878px; }
.g-cells { width: 180px; }
.g-edit { width: 257px; }
.g-ana { width: 77px; }
.big { display: flex; flex-direction: column; align-items: center; width: 54px; padding-top: 2px; }
.big > svg:first-child { width: 40px; height: 38px; }
.big > span { margin-top: 6px; line-height: 20px; }
.big > svg.i10 { margin-top: 3px; }
.two > span { margin-top: 4px; }
.two span svg { display: inline-block; }
.stack { display: flex; flex-direction: column; padding-top: 3px; }
.row { height: 20px; display: flex; align-items: center; gap: 4px; }
.stack .row + .row { margin-top: 12px; }
.far { margin-left: 10px; }
.near { margin-left: 0; }
.g-clip .body { padding-left: 14px; }
.g-clip .stack { padding-left: 7px; }
.paste > svg:first-child { width: 36px; margin-left: 4px; }
.lines { display: flex; flex-direction: column; padding-top: 7px; gap: 10px; }
.line { display: flex; align-items: center; height: 30px; }
.combo { position: relative; display: block; }
.combo svg { position: absolute; right: 3px; top: 10px; pointer-events: none; }
.combo select, .combo input { appearance: none; width: 100%; height: 30px; border: 1px solid #888; border-radius: 5px; background: #fff; padding: 0 3px; margin: 0; display: block; }
.w-font { width: 144px; margin: 0 3px 0 10px; }
.w-size { width: 62px; }
.w-num { width: 180px; margin-left: 10px; }
.ib { display: flex; align-items: center; justify-content: center; height: 28px; min-width: 20px; }
.grow { margin: 0 11px 0 8px; }
.sep { width: 1px; height: 30px; background: #d4d4d4; flex: none; }
.tools { gap: 8px; padding-left: 12px; }
.fmt { width: 24px; font-size: 17px; color: #333; }
.b { font-weight: 700; }
.i { font-family: "Liberation Serif", serif; font-style: italic; font-size: 19px; }
.u { text-decoration: underline; text-underline-offset: 3px; }
.al { padding-left: 9px; }
.al .ib { width: 31px; }
.al .sel { background: #e8e8ea; border: 1px solid #777; border-radius: 5px; }
.al .sep { margin: 0 3px 0 2px; }
.tall { height: 78px; margin: 6px 0 0; }
.g-align .body > .lines { width: 178px; }
.g-align .body > .wrapcol { width: auto; padding-left: 12px; gap: 20px; padding-top: 12px; }
.wrapcol .row { gap: 5px; }
.wrapcol .far { margin-left: 12px; }
.nums { padding-left: 12px; }
.sym { font-size: 21px; color: #444; width: 26px; }
.nums .i10 { margin: 0 12px 0 4px; }
.comma { margin-left: 9px; }
.nums .sep { margin: 0 6px 0 11px; }
.dec { position: relative; flex-direction: column; align-items: flex-end; font-size: 11px; line-height: 13px; width: 22px; color: #444; }
.dec + .dec { margin-left: 10px; }
.a1 { position: absolute; left: 0; top: 3px; }
.a2 { position: absolute; left: 0; bottom: 2px; }
.g-styles .body { padding-left: 13px; }
.g-styles .big { width: 85px; }
.g-styles .tbl { width: 80px; }
.g-styles .big > svg:first-child { height: 30px; width: 36px; margin: 5px 0 3px; }
.gallery { display: flex; flex: 1; margin: 7px 12px 0 0; height: 78px; border: 1px solid #ccc; border-radius: 5px; }
.cells { flex: 1; display: grid; grid-template-columns: repeat(5, 1fr); gap: 8px; padding: 6px 4px; }
.st { text-align: left; padding-left: 5px; height: 28px; font-size: 15px; overflow: hidden; }
.normal { outline: 1px solid #555; outline-offset: 3px; color: #000; }
.bad { background: #ffc7ce; color: #9c0006; }
.good { background: #c6efce; color: #006100; }
.neutral { background: #ffeb9c; color: #9c5700; }
.calc { background: #f2f2f2; color: #fa7d00; border: 1px solid #7f7f7f; font-weight: 700; }
.check { background: #a5a5a5; color: #fff; border: 3px double #3f3f3f; font-weight: 700; padding-left: 3px; }
.expl { color: #7f7f7f; font-style: italic; }
.fol { color: #954f72; text-decoration: underline; }
.hyp { color: #0563c1; text-decoration: underline; }
.input { background: #ffcc99; color: #3f3f76; border: 1px solid #7f7f7f; }
.spin { width: 19px; border-left: 1px solid #ccc; display: flex; flex-direction: column; }
.spin button { flex: 1; display: flex; align-items: center; justify-content: center; }
.spin button + button { border-top: 1px solid #ccc; }
.flip { transform: scaleY(-1); color: #aaa; }
.g-cells .body { padding-left: 9px; }
.g-edit .body { padding-left: 15px; }
.g-edit .stack { width: 116px; }
.g-edit .far { margin-left: 12px; }
.g-edit .big { width: 57px; }
.g-ana .big { width: 76px; }
.collapse { margin: auto 12px 2px auto; }

/* formula bar */
.formula { flex: none; height: 48px; padding: 10px 9px 8px 10px; display: flex; align-items: flex-start; }
.combo.name { width: 127px; }
.formula .combo svg { top: 9px; right: 5px; }
.formula input { border-color: #ccc; padding-left: 6px; font-size: 15px; }
.dots { width: 25px; text-align: center; font-size: 20px; line-height: 30px; }
.fx { width: 92px; height: 30px; border: 1px solid #ccc; border-radius: 5px; background: #fff; display: flex; align-items: center; justify-content: space-around; margin-right: 5px; }
.fxb { font: italic 21px "Liberation Serif", serif; }
.fbar { flex: 1; }

/* worksheet */
.sheet { flex: 1; min-height: 0; display: flex; border-bottom: 1px solid #d8d8d8; }
.viewport { flex: 1; min-width: 0; overflow: hidden; background: #fff; border-right: 1px solid #d8d8d8; }
.grid { border-collapse: separate; border-spacing: 0; table-layout: fixed; width: 2541px; font: 16px/20px Lato, "Open Sans", sans-serif; color: #000; }
.grid td, .grid th { padding: 0 3px; height: 22px; white-space: nowrap; text-align: left; font-weight: 400; }
.grid tr.tall23 td, .grid tr.tall23 th { height: 23px; }
.c-num { width: 34px; }
.c-a { width: 71px; }
.c-b { width: 260px; }
.c-m { width: 128px; }
.grid thead th { height: 23px; background: #efefef; color: #444; text-align: center; border-right: 1px solid #d6d6d6; border-bottom: 1px solid #a6a6a6; }
.grid tbody th { background: #efefef; color: #444; text-align: center; padding: 0; border-right: 1px solid #a6a6a6; border-bottom: 1px solid #d6d6d6; }
.grid .corner { border-bottom-color: #d6d6d6; padding: 4px 3px 4px 16px; }
.corner i { display: block; width: 14px; height: 14px; background: linear-gradient(135deg, transparent 50%, #d8d8d8 50%); }
.grid td.lab, .grid thead th.split { border-right: 1px solid #999; }
.grid .num { text-align: right; padding-right: 9px; }
.grid .paren, .grid .hd { text-align: right; padding-right: 4px; }
.grid .in { padding-left: 8px; }
.grid .box { border-left: 1px solid #000; }
.bold td, .title td { font-weight: 700; }
.grey td, .grid .year { color: #808080; font-weight: 400; }
.months td + td { background: #f2f2f2; font-weight: 700; text-decoration: underline; text-underline-offset: 3px; }
.grid .months td, .grid .months th { border-bottom: 1px solid #999; }
.bar td + td { background: #000; color: #fff; font-weight: 700; }
.under td { text-decoration: underline; text-underline-offset: 3px; }
.shade td + td { background: #f2f2f2; }
.grid .bot td + td { border-bottom: 1px solid #000; }
.grid .dbl td + td { border-bottom: 3px double #000; }
.grid .thick td + td { border-bottom: 2px solid #000; }
.vscroll { width: 25px; display: flex; flex-direction: column; align-items: center; padding: 4px 0 2px; gap: 4px; }
.vscroll svg { fill: #6b6b6b; }
.thumb { width: 12px; flex: 1; margin-bottom: 24px; border-radius: 6px; background: #707070; }

/* sheet tabs */
.tabs { flex: none; height: 40px; display: flex; font-size: 16px; color: #111; border-bottom: 1px solid #fff; }
.arrows { width: 141px; flex: none; display: flex; align-items: center; gap: 27px; padding-left: 28px; }
.dim { color: #aaa; }
.strip { flex: 1; min-width: 0; display: grid; overflow: hidden; column-gap: 11px; padding-top: 5px; grid-template-columns: 64px 136px 173px 63px 40px 103px 99px 126px 139px 63px 58px 68px 64px 68px 63px 138px 127px 134px 175px 1fr; }
.strip a { position: relative; height: 30px; line-height: 31px; text-align: center; border-radius: 5px; white-space: nowrap; background: #f1f1f1; }
.strip a + a::before { content: ""; position: absolute; left: -6px; top: 3px; width: 1px; height: 24px; background: #d0d0d0; }
.strip .w { background: #fff; }
.strip .y { background: #ffffcc; }
.strip .p { background: #7030a0; color: #fff; }
.strip .last { text-align: left; padding-left: 11px; border-radius: 5px 0 0 5px; overflow: hidden; }
.strip .cur { background: #fff; margin-top: -5px; height: 35px; border-radius: 0 0 5px 5px; font-weight: 600; box-shadow: 0 1px 1px #ccc; }
.cur span { display: inline-block; height: 32px; line-height: 34px; border-bottom: 2px solid #107c41; }
.strip .cur::before { top: 8px; }
.tabtools { flex: none; width: 268px; display: flex; align-items: center; gap: 24px; padding-left: 11px; }
.hscroll { display: flex; align-items: center; width: 123px; height: 20px; border-radius: 10px; background: #f5f5f5; padding: 0 6px; fill: #666; margin-left: -10px; }
.hscroll i { width: 21px; height: 11px; border-radius: 6px; background: #707070; margin: 0 auto 0 5px; }

/* status bar */
.status { flex: none; height: 27px; background: #f4f4f4; display: flex; align-items: center; padding-left: 9px; font-size: 12px; }
.ready { width: 62px; }
.acc { margin: 0 0 0 21px; }
.views { margin-left: auto; display: flex; align-items: center; height: 27px; padding-right: 17px; }
.view { width: 50px; height: 27px; display: flex; align-items: center; justify-content: center; }
.view.on { background: #dcdcdc; }
.pm { font-size: 17px; width: 19px; text-align: center; }
.view + .pm { margin-left: 3px; }
.zoom { appearance: none; width: 125px; height: 1px; margin: 0 0 0 1px; background: #666; }
.zoom::-webkit-slider-thumb { appearance: none; width: 6px; height: 14px; background: #666; }
.pct { margin-left: 11px; width: 26px; }

/* taskbar */
.taskbar { flex: none; height: 50px; background: #d0dfea; display: flex; color: #111; }
.start { width: 60px; padding-left: 20px; }
.tsearch { width: 360px; background: #fff; border: 1px solid #c4c4c4; border-bottom: 0; display: flex; align-items: center; padding-left: 14px; gap: 13px; position: relative; }
.tsearch input { border: 0; padding: 0; width: 200px; font-size: 18px; }
.tsearch input::placeholder { color: #333; }
.globe { position: absolute; right: 6px; bottom: 0; width: 88px; height: 48px; overflow: hidden; }
.apps { display: flex; }
.app { width: 62px; display: flex; align-items: center; justify-content: center; border-bottom: 3px solid transparent; padding-top: 3px; }
.app.first { width: 63px; }
.app > svg { width: 28px; height: 28px; }
.app > svg.i22 { width: 22px; height: 22px; }
.app.run { position: relative; }
.app.run::after { content: ""; position: absolute; left: 5px; right: 5px; bottom: -3px; height: 3px; background: #0078d7; }
.tray { margin-left: auto; display: flex; align-items: center; gap: 10px; }
.sun { width: 26px; height: 26px; }
.weather { font-size: 17px; width: 112px; margin: 0 1px 0 2px; }
.clock { display: flex; flex-direction: column; align-items: center; line-height: 23px; width: 76px; margin: 0 9px 0 0; }
.note { margin-right: 12px; }
.desk { width: 6px; height: 50px; border-left: 1px solid #9ab; }
```
FILE: grid.js
```js
const COLS = "CDEFGHIJKLMNOPQRS".split("");
const MONTHS = "Jan Feb Mar Apr May Jun Jul Aug Sep Oct Nov Dec".split(" ");

const fill = (start, rest) => start.concat(Array(COLS.length - start.length).fill(rest));
const cash = [59232, 55011, 47434, 34171, 18683, "($0)", 17002, 33346, 49689, 66691, 83035, 100037, 112598, 125160, 139695, 152257, 165476];
const loans = fill([440000, 880000, 1320000, 1620000, 1920000], 2220000);
const assets = [499232, 935011, 1367434, 1654171, 1938683, 2220000, 2237002, 2253346, 2269689, 2286691, 2303035, 2320037, 2332598, 2345160, 2359695, 2372257, 2385476];
const credit = fill([440000, 880000, 1320000, 1607904, 1895808], 2183712);
const retained = [-90071, -94293, -101869, -103036, -106429, -113015, -96013, -79670, -63326, -46324, -29980, -12978, -417, 12144, 26680, 39241, 52461];
const equity = [59232, 55011, 47434, 46267, 42875, 36288, 53290, 69634, 85977, 102979, 119323, 136325, 148886, 161448, 175983, 188545, 201764];

// number: [row class, label, values, label class]
const ROWS = {
  1: ["title tall23", "Flat Fee 123, LLC"],
  2: ["title tall23", "Balance Sheet"],
  3: ["title tall23", "As of Month End: Jan-2021 to Dec-2030", COLS.map((c, i) => (i < 12 ? "1" : "2"))],
  4: ["grey", "", COLS.map((c, i) => String(i + 1))],
  5: ["months", "", COLS.map((c, i) => MONTHS[i % 12] + "-" + (i < 12 ? 21 : 22))],
  8: ["bar", "Assets", null, "box"],
  10: ["under", "Current Assets", null, "box"],
  11: ["bot", "Cash", cash, "in box"],
  13: ["shade bot", "Total Current Assets", cash, "in box"],
  15: ["bot tall23", "Loans Receivable", loans, "in box"],
  16: ["shade bold dbl tall23", "Total Assets", assets, "in box"],
  17: ["tall23", ""],
  19: ["bar", "Liabilities", null, "in box"],
  20: ["under", "Credit Facility", null, "in box"],
  21: ["bot", "Credit Facility", credit, "in box"],
  22: ["shade bold dbl tall23", "Total Liabilities", credit, "in box"],
  23: ["tall23", ""],
  25: ["bar", "Owner Equity", null, "in box"],
  26: ["under", "Common Stock - paid in capital", null, "in box"],
  27: ["", "Outside Investors", fill([], 99303), "in box"],
  28: ["bot", "Founders/Operators/Employees", fill([], 50000), "in box"],
  29: ["shade bot", "Total Common Stock", fill([], 149303), "in box"],
  30: ["bot", "", null, "box"],
  31: ["shade bot", "Retained Earnings", retained, "in box"],
  32: ["bot", "", null, "box"],
  33: ["shade bold dbl tall23", "Total Owners Equity", equity, "in box"],
  34: ["bot tall23", ""],
  35: ["shade bold thick tall23", "Total Liabilities + Owners Equity", assets, "in"],
  36: ["bot", ""],
  37: ["shade bold thick tall23", "Total Assets", assets, "in"],
  40: ["", "Check", fill([], "0.00")]
};
const HIDDEN = [9, 12, 14];

function money(v) {
  if (typeof v === "string") return v;
  const s = "$" + Math.abs(v).toLocaleString("en-US");
  return v < 0 ? "(" + s + ")" : s;
}

function kindOf(n, text) {
  if (n === 3) return "hd year";
  if (n <= 5) return "hd";
  return text.startsWith("(") ? "paren" : "num";
}

let html = '<colgroup><col class="c-num"><col class="c-a"><col class="c-b">' + '<col class="c-m">'.repeat(COLS.length) + "</colgroup>";
html += '<thead><tr><th class="corner"><i></i></th><th>A</th><th class="split">B</th>' + COLS.map(c => `<th>${c}</th>`).join("") + "</tr></thead><tbody>";
for (let n = 1; n <= 49; n++) {
  if (HIDDEN.includes(n)) continue;
  const [cls, label, values, labCls] = ROWS[n] || ["", "", null, ""];
  const inA = n <= 3;
  html += `<tr class="${cls}"><th>${n}</th><td>${inA ? label : ""}</td><td class="lab ${labCls || ""}">${inA ? "" : label}</td>`;
  html += COLS.map((c, i) => {
    if (!values) return "<td></td>";
    const text = money(values[i]);
    return `<td class="${kindOf(n, text)}">${text}</td>`;
  }).join("");
  html += "</tr>";
}
html += '<tr><th></th><td></td><td class="lab"></td>' + "<td></td>".repeat(COLS.length) + "</tr>";
document.getElementById("grid-table").innerHTML = html + "</tbody>";
```
